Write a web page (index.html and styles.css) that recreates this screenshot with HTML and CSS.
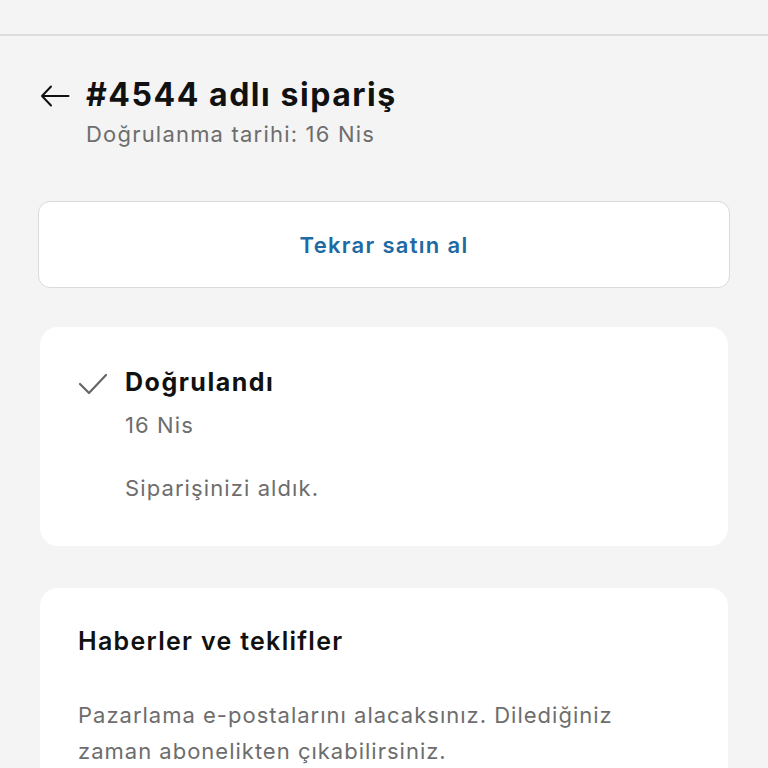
FILE: index.html
```html
<!DOCTYPE html>
<html lang="tr">
<head>
<meta charset="utf-8">
<link rel="stylesheet" href="styles.css">
</head>
<body>
<div class="topbar"></div>
<main class="page">
  <header class="head">
    <div class="title-row">
      <svg class="back" width="30" height="24" viewBox="0 0 30 24" aria-hidden="true">
        <path d="M28.5 12H2M11 2.5L2 12l9 9.5" fill="none" stroke="#111" stroke-width="2" stroke-linecap="round" stroke-linejoin="round"/>
      </svg>
      <h1 class="title">#4544 adlı sipariş</h1>
    </div>
    <p class="subtitle">Doğrulanma tarihi: 16 Nis</p>
  </header>

  <button class="rebuy">Tekrar satın al</button>

  <section class="card status">
    <div class="status-row">
      <svg class="check" width="30" height="22" viewBox="0 0 30 22" aria-hidden="true">
        <path d="M2 11l9 9L28 2" fill="none" stroke="#666" stroke-width="2.2" stroke-linecap="round" stroke-linejoin="round"/>
      </svg>
      <div class="status-body">
        <h2 class="status-title">Doğrulandı</h2>
        <p class="muted date">16 Nis</p>
        <p class="muted note">Siparişinizi aldık.</p>
      </div>
    </div>
  </section>

  <section class="card news">
    <h2 class="news-title">Haberler ve teklifler</h2>
    <p class="muted news-text">Pazarlama e-postalarını alacaksınız. Dilediğiniz zaman abonelikten çıkabilirsiniz.</p>
  </section>
</main>
</body>
</html>
```

FILE: styles.css
```css
html, body {
  margin: 0;
  padding: 0;
  background: #f4f4f4;
  font-family: Inter, "Noto Sans", "Liberation Sans", sans-serif;
  color: #111;
}
.topbar {
  height: 34px;
  border-bottom: 2px solid #dcdcdc;
}
.page {
  padding: 0 38px;
}
.head {
  padding-top: 37px;
}
.title-row {
  display: flex;
  align-items: center;
  gap: 16px;
}
.back {
  flex: none;
  margin-left: 2px;
  margin-top: 2px;
}
.title {
  margin: 0;
  font-size: 32px;
  font-weight: 700;
  line-height: 44px;
  letter-spacing: 1.55px;
}
.subtitle {
  margin: 1px 0 0 48px;
  font-size: 22px;
  line-height: 32px;
  color: #6d6d6d;
  letter-spacing: 1.2px;
}
.rebuy {
  display: block;
  width: 100%;
  margin-top: 51px;
  height: 87px;
  background: #fff;
  border: 1.5px solid #dadada;
  border-radius: 12px;
  font-family: inherit;
  font-size: 22px;
  font-weight: 600;
  color: #1d6aa5;
  letter-spacing: 1.3px;
  padding: 0;
}
.card {
  background: #fff;
  border-radius: 18px;
  margin: 0 2px;
}
.status {
  margin-top: 39px;
  padding: 36px 38px 40px;
}
.status-row {
  display: flex;
  gap: 17px;
}
.check {
  flex: none;
  margin-top: 10px;
}
.status-title {
  margin: 0;
  font-size: 25px;
  font-weight: 700;
  line-height: 38px;
  letter-spacing: 1.5px;
}
.muted {
  margin: 0;
  color: #6d6d6d;
  font-size: 22px;
  line-height: 36px;
  letter-spacing: 1.1px;
}
.date {
  margin-top: 6px;
}
.note {
  margin-top: 27px;
}
.news {
  margin-top: 42px;
  padding: 34px 38px 40px;
}
.news-title {
  margin: 0;
  font-size: 25px;
  font-weight: 600;
  line-height: 38px;
  letter-spacing: 1.3px;
}
.news-text {
  margin-top: 37px;
  letter-spacing: 1.0px;
}
```
